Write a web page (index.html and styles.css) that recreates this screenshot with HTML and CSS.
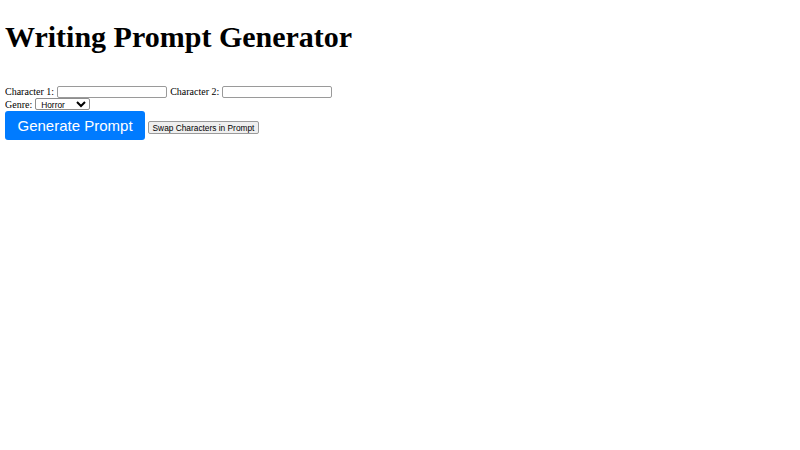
FILE: index.html
```html
<!DOCTYPE html>
<html>
<head>
<meta charset="utf-8">
<title>Writing Prompt Generator</title>
<link rel="stylesheet" href="styles.css">
</head>
<body>
<h1 class="title">Writing Prompt Generator</h1>
<div class="form">
  <div class="row">
    <label for="c1">Character 1:</label>
    <input id="c1" type="text" class="field">
    <label for="c2">Character 2:</label>
    <input id="c2" type="text" class="field">
  </div>
  <div class="row">
    <label for="genre">Genre:</label>
    <select id="genre" class="genre">
      <option>Horror</option>
      <option>Fantasy</option>
      <option>Science Fiction</option>
      <option>Romance</option>
      <option>Mystery</option>
    </select>
  </div>
  <div class="row buttons">
    <button class="generate">Generate Prompt</button>
    <button class="swap">Swap Characters in Prompt</button>
  </div>
</div>
</body>
</html>
```
FILE: styles.css
```css
body {
  margin: 5px;
  font-family: "Liberation Serif", serif;
  font-size: 10px;
  color: #000;
  background: #fff;
}
.title {
  font-size: 30px;
  font-weight: bold;
  line-height: normal;
  margin: 15px 0 31.5px;
}
.row {
  display: flex;
  align-items: baseline;
  gap: 3px;
}
.field {
  box-sizing: border-box;
  width: 110px;
  height: 12px;
  margin: 0;
  padding: 0 1px;
  border: 1px solid #9a9a9a;
  border-radius: 2px;
  font-family: "Liberation Sans", sans-serif;
  font-size: 8.33px;
  background: #fff;
}
.genre {
  box-sizing: border-box;
  width: 55px;
  height: 12px;
  margin: 0;
  padding: 0 0 0 1px;
  border: 1px solid #8e8e8e;
  border-radius: 2px;
  font-family: "Liberation Sans", sans-serif;
  font-size: 8.33px;
  background: #fff;
  color: #000;
}
.buttons {
  margin-top: 1px;
}
.generate {
  margin: 0;
  background: #007bff;
  color: #fff;
  border: none;
  border-radius: 3px;
  padding: 6.25px 12.5px;
  font-family: "Liberation Sans", sans-serif;
  font-size: 15px;
  line-height: normal;
}
.swap {
  margin: 0;
  box-sizing: border-box;
  height: 13px;
  padding: 0 3.5px;
  background: #efefef;
  color: #000;
  border: 1px solid #9a9a9a;
  border-radius: 2px;
  font-family: "Liberation Sans", sans-serif;
  font-size: 8.33px;
  line-height: normal;
}
```
